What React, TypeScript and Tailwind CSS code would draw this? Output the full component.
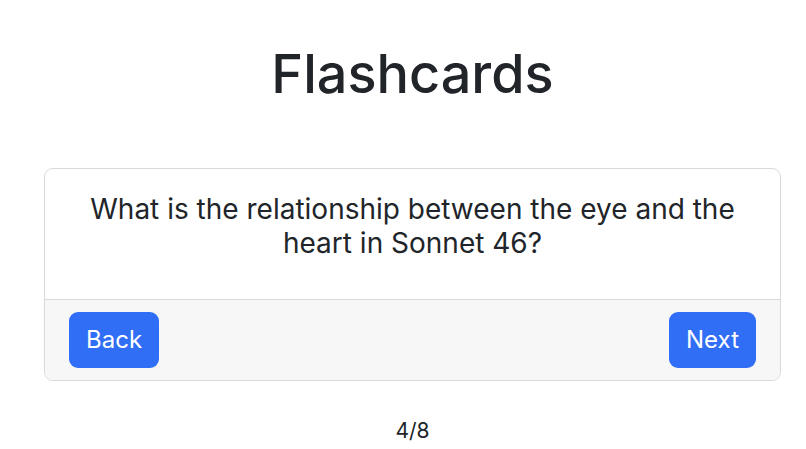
export default function App() {
  return (
    <div className="min-h-screen bg-white font-['Inter','Liberation_Sans',sans-serif] text-[#212529]">
      <div className="pl-[44px] pr-[25px] pt-[41px]">
        <h1 className="text-center text-[54px] leading-[66px] font-medium">Flashcards</h1>

        {/* Card */}
        <div className="mt-[61px] overflow-hidden rounded-[9px] border border-[#d9d9d9]">
          <div className="px-6 pt-6 pb-[39px]">
            <p className="text-center text-[28px] leading-[33.5px]">
              What is the relationship between the eye and the heart in Sonnet 46?
            </p>
          </div>
          <div className="flex items-center justify-between border-t border-[#d9d9d9] bg-[#f7f7f7] px-6 py-3">
            <button className="h-[56px] rounded-[9px] bg-[#2f6ef5] px-[17px] text-[24px] text-white">Back</button>
            <button className="h-[56px] rounded-[9px] bg-[#2f6ef5] px-[17px] text-[24px] text-white">Next</button>
          </div>
        </div>

        <p className="mt-[34px] text-center text-[21px] leading-[31px]">4/8</p>
      </div>
    </div>
  );
}
